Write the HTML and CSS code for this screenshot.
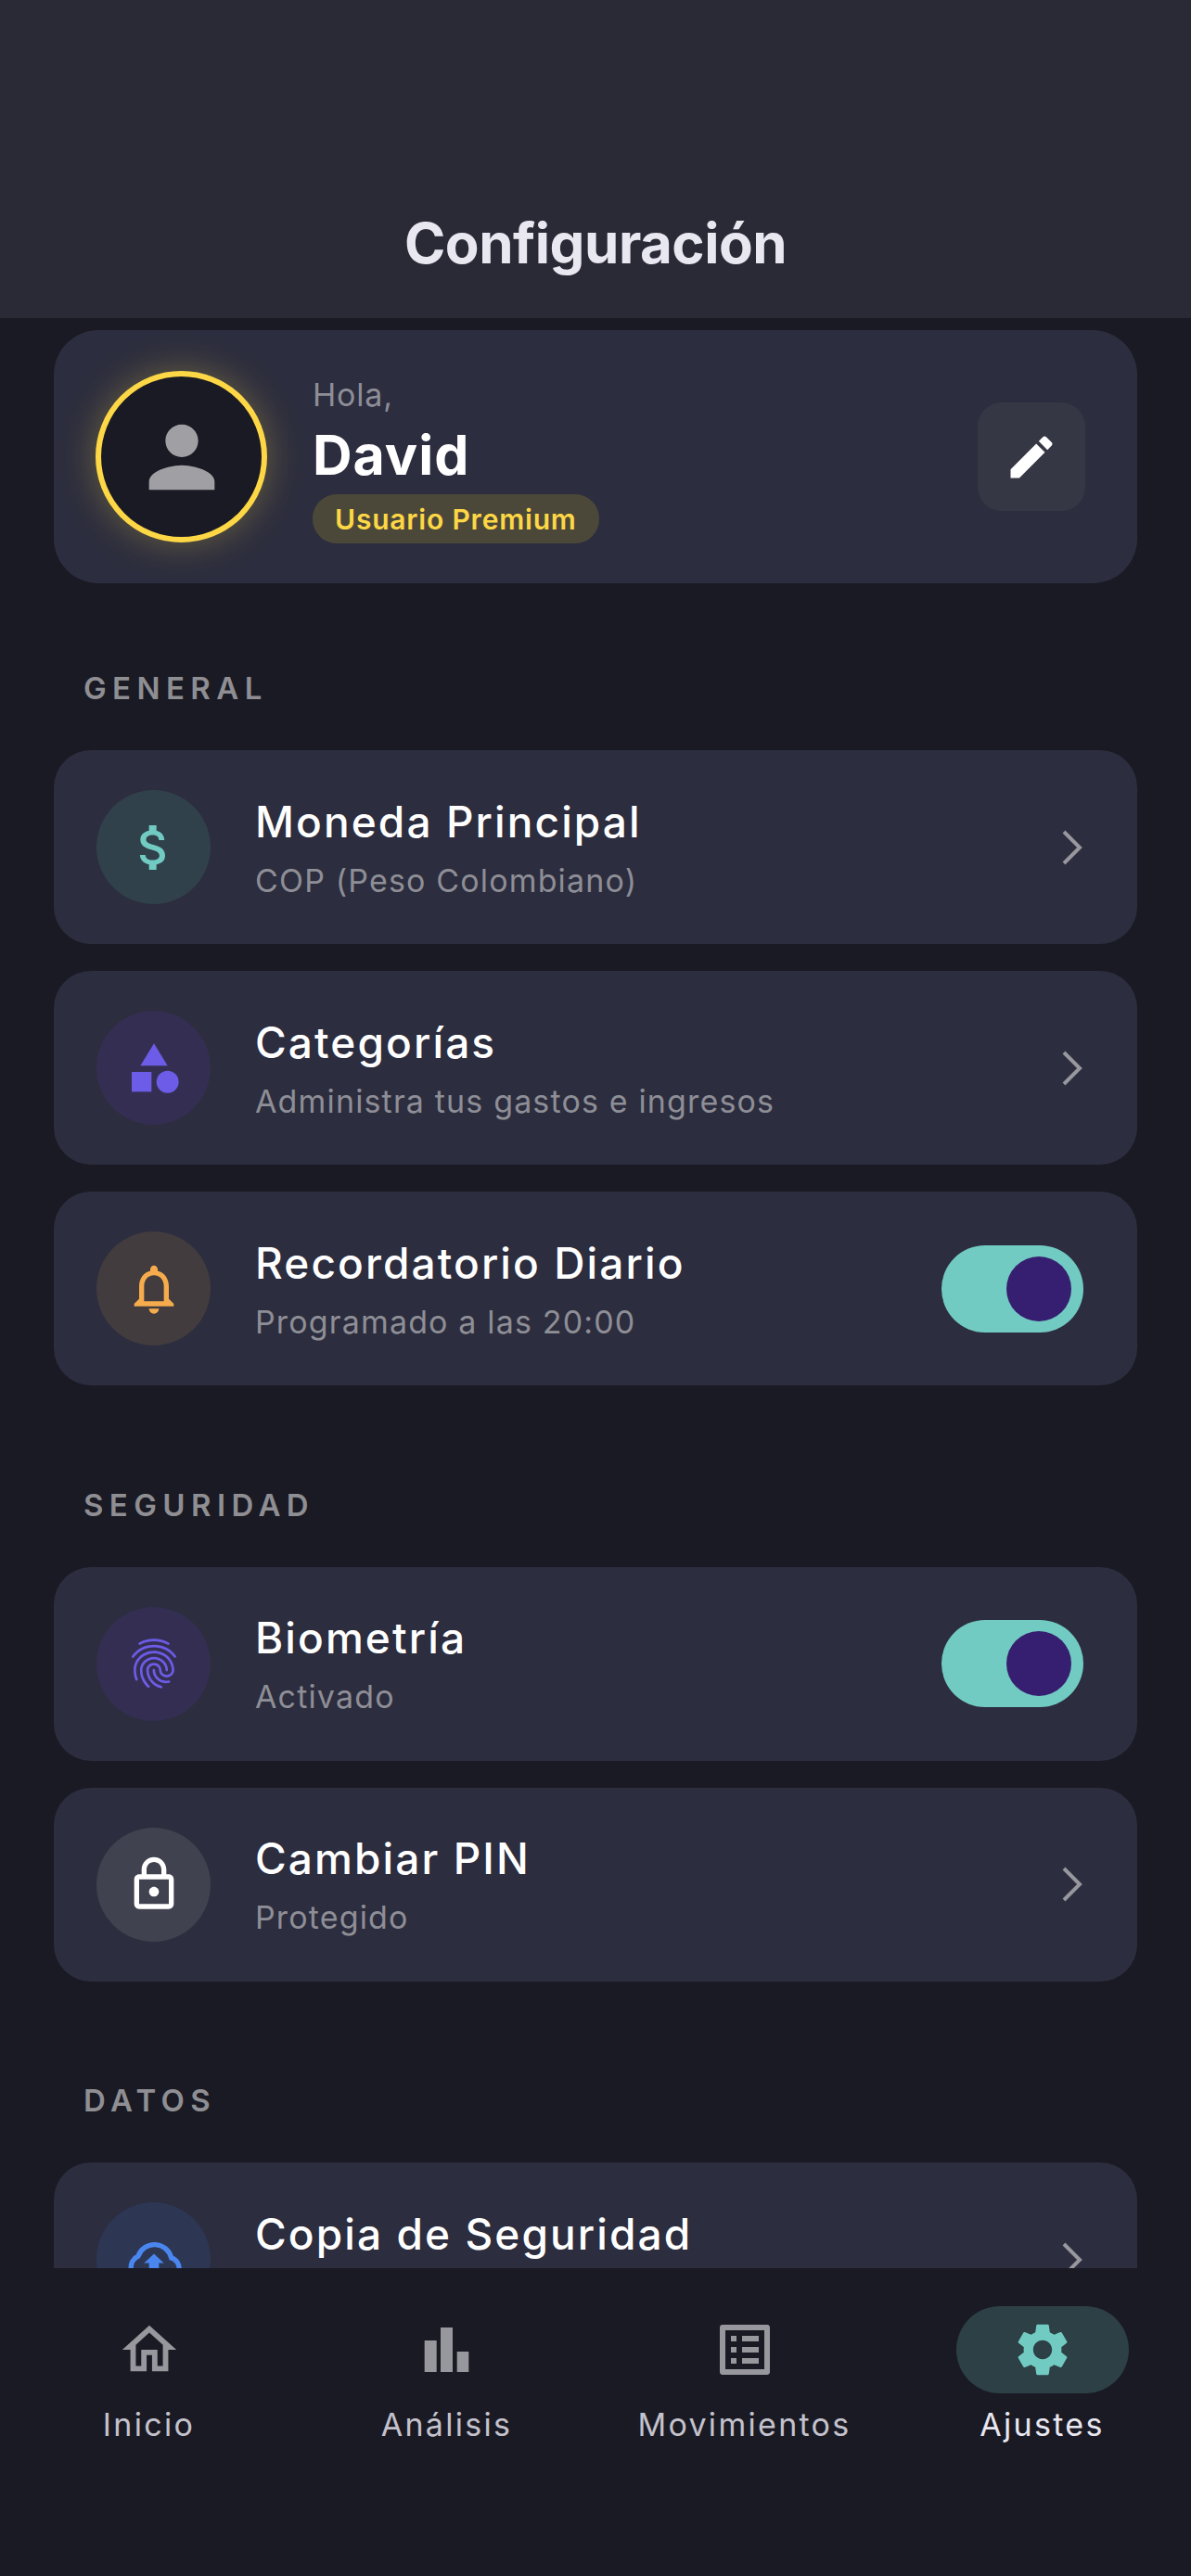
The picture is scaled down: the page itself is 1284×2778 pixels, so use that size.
FILE: index.html
```html
<!DOCTYPE html>
<html lang="es">
<head>
    <meta charset="UTF-8">
    <meta name="viewport" content="width=device-width, initial-scale=1.0">
    <title>Configuración</title>
    <link rel="stylesheet" href="styles.css">
</head>
<body>
    <div class="app">
        <header class="topbar">
            <h1>Configuración</h1>
        </header>

        <main class="content">
            <section class="profile">
                <div class="avatar">
                    <svg viewBox="0 0 24 24" class="avatar-icon"><path d="M12 12c2.21 0 4-1.79 4-4s-1.79-4-4-4-4 1.79-4 4 1.79 4 4 4zm0 2c-2.67 0-8 1.34-8 4v2h16v-2c0-2.66-5.33-4-8-4z"/></svg>
                </div>
                <div class="profile-text">
                    <p class="hello">Hola,</p>
                    <p class="name">David</p>
                    <span class="badge">Usuario Premium</span>
                </div>
                <button class="edit-btn" aria-label="Editar">
                    <svg viewBox="0 0 24 24"><path d="M3 17.25V21h3.75L17.81 9.94l-3.75-3.75L3 17.25zM20.71 7.04c.39-.39.39-1.02 0-1.41l-2.34-2.34c-.39-.39-1.02-.39-1.41 0l-1.83 1.83 3.75 3.75 1.83-1.83z"/></svg>
                </button>
            </section>

            <h2 class="section-label first">GENERAL</h2>
            <div class="rows">
                <div class="row">
                    <div class="row-icon teal">
                        <svg viewBox="0 0 24 24"><path d="M11.8 10.9c-2.27-.59-3-1.2-3-2.15 0-1.09 1.01-1.85 2.7-1.85 1.78 0 2.44.85 2.5 2.1h2.21c-.07-1.72-1.12-3.3-3.21-3.81V3h-3v2.16c-1.94.42-3.5 1.68-3.5 3.61 0 2.31 1.91 3.46 4.7 4.13 2.5.6 3 1.48 3 2.41 0 .69-.49 1.79-2.7 1.79-2.06 0-2.87-.92-2.98-2.1h-2.2c.12 2.19 1.76 3.42 3.68 3.83V21h3v-2.15c1.95-.37 3.5-1.5 3.5-3.55 0-2.84-2.43-3.81-4.7-4.4z"/></svg>
                    </div>
                    <div class="row-text">
                        <p class="row-title">Moneda Principal</p>
                        <p class="row-sub">COP (Peso Colombiano)</p>
                    </div>
                    <svg class="chevron" viewBox="0 0 24 40"><path d="M3 3l17 17L3 37"/></svg>
                </div>
                <div class="row">
                    <div class="row-icon violet">
                        <svg viewBox="0 0 24 24"><path d="M12 2l-5.5 9h11z"/><circle cx="17.5" cy="17.5" r="4.5"/><path d="M3 13.5h8v8H3z"/></svg>
                    </div>
                    <div class="row-text">
                        <p class="row-title">Categorías</p>
                        <p class="row-sub">Administra tus gastos e ingresos</p>
                    </div>
                    <svg class="chevron" viewBox="0 0 24 40"><path d="M3 3l17 17L3 37"/></svg>
                </div>
                <div class="row">
                    <div class="row-icon orange">
                        <svg viewBox="0 0 24 24"><path d="M12 22c1.1 0 2-.9 2-2h-4c0 1.1.9 2 2 2zm6-6v-5c0-3.07-1.63-5.64-4.5-6.32V4c0-.83-.67-1.5-1.5-1.5s-1.5.67-1.5 1.5v.68C7.64 5.36 6 7.92 6 11v5l-2 2v1h16v-1l-2-2zm-2 1H8v-6c0-2.48 1.51-4.5 4-4.5s4 2.02 4 4.5v6z"/></svg>
                    </div>
                    <div class="row-text">
                        <p class="row-title">Recordatorio Diario</p>
                        <p class="row-sub">Programado a las 20:00</p>
                    </div>
                    <div class="toggle"><span class="knob"></span></div>
                </div>
            </div>

            <h2 class="section-label">SEGURIDAD</h2>
            <div class="rows">
                <div class="row">
                    <div class="row-icon violet">
                        <svg viewBox="0 0 24 24"><path d="M17.81 4.47c-.08 0-.16-.02-.23-.06C15.66 3.42 14 3 12.01 3c-1.98 0-3.86.47-5.57 1.41-.24.13-.54.04-.68-.2-.13-.24-.04-.55.2-.68C7.82 2.52 9.86 2 12.01 2c2.13 0 3.99.47 6.03 1.52.25.13.34.43.21.67-.09.18-.26.28-.44.28zM3.5 9.72c-.1 0-.2-.03-.29-.09-.23-.16-.28-.47-.12-.7.99-1.4 2.25-2.5 3.75-3.27C9.98 4.04 14 4.03 17.15 5.65c1.5.77 2.76 1.86 3.75 3.25.16.22.11.54-.12.7-.23.16-.54.11-.7-.12-.9-1.26-2.04-2.25-3.39-2.94-2.87-1.47-6.54-1.47-9.4.01-1.36.7-2.5 1.7-3.4 2.96-.08.14-.23.21-.39.21zm6.25 12.07c-.13 0-.26-.05-.35-.15-.87-.87-1.34-1.43-2.01-2.64-.69-1.23-1.05-2.73-1.05-4.34 0-2.97 2.54-5.39 5.66-5.39s5.66 2.42 5.66 5.39c0 .28-.22.5-.5.5s-.5-.22-.5-.5c0-2.42-2.09-4.39-4.66-4.39-2.57 0-4.66 1.97-4.66 4.39 0 1.44.32 2.77.93 3.85.64 1.15 1.08 1.64 1.85 2.42.19.2.19.51 0 .71-.11.1-.24.15-.37.15zm7.17-1.85c-1.19 0-2.24-.3-3.1-.89-1.49-1.01-2.38-2.65-2.38-4.39 0-.28.22-.5.5-.5s.5.22.5.5c0 1.41.72 2.74 1.94 3.56.71.48 1.54.71 2.54.71.24 0 .64-.03 1.04-.1.27-.05.53.13.58.41.05.27-.13.53-.41.58-.57.11-1.07.12-1.21.12zM14.91 22c-.04 0-.09-.01-.13-.02-1.59-.44-2.63-1.03-3.72-2.1-1.4-1.39-2.17-3.24-2.17-5.22 0-1.62 1.38-2.94 3.08-2.94 1.7 0 3.08 1.32 3.08 2.94 0 1.07.93 1.94 2.08 1.94s2.08-.87 2.08-1.94c0-3.77-3.25-6.83-7.25-6.83-2.84 0-5.44 1.58-6.61 4.03-.39.81-.59 1.76-.59 2.8 0 .78.07 2.01.67 3.61.1.26-.03.55-.29.64-.26.1-.55-.04-.64-.29-.49-1.31-.73-2.61-.73-3.96 0-1.2.23-2.29.68-3.24 1.33-2.79 4.28-4.6 7.51-4.6 4.55 0 8.25 3.51 8.25 7.83 0 1.62-1.38 2.94-3.08 2.94s-3.08-1.32-3.08-2.94c0-1.07-.93-1.94-2.08-1.94s-2.08.87-2.08 1.94c0 1.71.66 3.31 1.87 4.51.95.94 1.86 1.46 3.27 1.85.27.07.42.35.35.61-.05.23-.26.38-.47.38z"/></svg>
                    </div>
                    <div class="row-text">
                        <p class="row-title">Biometría</p>
                        <p class="row-sub">Activado</p>
                    </div>
                    <div class="toggle"><span class="knob"></span></div>
                </div>
                <div class="row">
                    <div class="row-icon white">
                        <svg viewBox="0 0 24 24"><path d="M18 8h-1V6c0-2.76-2.24-5-5-5S7 3.24 7 6v2H6c-1.1 0-2 .9-2 2v10c0 1.1.9 2 2 2h12c1.1 0 2-.9 2-2V10c0-1.1-.9-2-2-2zM9 6c0-1.66 1.34-3 3-3s3 1.34 3 3v2H9V6zm9 14H6V10h12v10zm-6-3c1.1 0 2-.9 2-2s-.9-2-2-2-2 .9-2 2 .9 2 2 2z"/></svg>
                    </div>
                    <div class="row-text">
                        <p class="row-title">Cambiar PIN</p>
                        <p class="row-sub">Protegido</p>
                    </div>
                    <svg class="chevron" viewBox="0 0 24 40"><path d="M3 3l17 17L3 37"/></svg>
                </div>
            </div>

            <h2 class="section-label">DATOS</h2>
            <div class="rows">
                <div class="row">
                    <div class="row-icon blue">
                        <svg viewBox="0 0 24 24"><path class="cloud-line" d="M7 20H17.5A4.5 4.5 0 0 0 19 11.2A7 7 0 0 0 5.6 10.5A5 5 0 0 0 7 20z"/><path d="M8 13.3L12 9.6l4 3.7h-2V17h-4v-3.7z"/></svg>
                    </div>
                    <div class="row-text">
                        <p class="row-title">Copia de Seguridad</p>
                        <p class="row-sub">&nbsp;</p>
                    </div>
                    <svg class="chevron" viewBox="0 0 24 40"><path d="M3 3l17 17L3 37"/></svg>
                </div>
            </div>
        </main>

        <nav class="tabbar">
            <div class="tab">
                <span class="tab-icon"><svg class="ic-home" viewBox="0 0 24 24"><path d="M12 5.69l5 4.5V18h-2v-6H9v6H7v-7.81l5-4.5M12 3L2 12h3v8h6v-6h2v6h6v-8h3L12 3z"/></svg></span>
                <span class="tab-label">Inicio</span>
            </div>
            <div class="tab">
                <span class="tab-icon"><svg class="ic-bars" viewBox="0 0 66 66"><path d="M8.7 23h13v34h-13zM26 9h13v48H26zM43.7 35h12.6v22H43.7z"/></svg></span>
                <span class="tab-label">Análisis</span>
            </div>
            <div class="tab">
                <span class="tab-icon"><svg class="ic-list" viewBox="0 0 24 24"><path d="M19 5v14H5V5h14m1.1-2H3.9c-.5 0-.9.4-.9.9v16.2c0 .4.4.9.9.9h16.2c.4 0 .9-.5.9-.9V3.9c0-.5-.5-.9-.9-.9zM11 7h6v2h-6V7zm0 4h6v2h-6v-2zm0 4h6v2h-6zM7 7h2v2H7zm0 4h2v2H7zm0 4h2v2H7z"/></svg></span>
                <span class="tab-label">Movimientos</span>
            </div>
            <div class="tab active">
                <span class="tab-icon"><svg class="ic-gear" viewBox="0 0 24 24"><path d="M19.14 12.94c.04-.3.06-.61.06-.94 0-.32-.02-.64-.07-.94l2.03-1.58c.18-.14.23-.41.12-.61l-1.92-3.32c-.12-.22-.37-.29-.59-.22l-2.39.96c-.5-.38-1.03-.7-1.62-.94l-.36-2.54c-.04-.24-.24-.41-.48-.41h-3.84c-.24 0-.43.17-.47.41l-.36 2.54c-.59.24-1.13.57-1.62.94l-2.39-.96c-.22-.08-.47 0-.59.22L2.74 8.87c-.12.21-.08.47.12.61l2.03 1.58c-.05.3-.09.63-.09.94s.02.64.07.94l-2.03 1.58c-.18.14-.23.41-.12.61l1.92 3.32c.12.22.37.29.59.22l2.39-.96c.5.38 1.03.7 1.62.94l.36 2.54c.05.24.24.41.48.41h3.84c.24 0 .44-.17.47-.41l.36-2.54c.59-.24 1.13-.56 1.62-.94l2.39.96c.22.08.47 0 .59-.22l1.92-3.32c.12-.22.07-.47-.12-.61l-2.01-1.58zM12 15.6c-1.98 0-3.6-1.62-3.6-3.6s1.62-3.6 3.6-3.6 3.6 1.62 3.6 3.6-1.62 3.6-3.6 3.6z"/></svg></span>
                <span class="tab-label">Ajustes</span>
            </div>
        </nav>
    </div>
</body>
</html>
```

FILE: styles.css
```css
* {
    box-sizing: border-box;
}

body {
    margin: 0;
    background: #1a1a24;
    font-family: 'Inter', 'Liberation Sans', sans-serif;
    color: #fff;
}

p, h1, h2 {
    margin: 0;
}

.app {
    display: flex;
    flex-direction: column;
    height: 2778px;
    overflow: hidden;
}

.topbar {
    flex: none;
    height: 343px;
    padding-top: 222px;
    background: #2a2a36;
    text-align: center;
}

.topbar h1 {
    font-size: 60px;
    line-height: 80px;
    font-weight: 700;
    letter-spacing: -0.5px;
    color: #e9e7f0;
}

.content {
    flex: 1;
    min-height: 0;
    overflow: hidden;
    padding: 13px 58px 0 58px;
}

/* Profile card */
.profile {
    display: flex;
    align-items: center;
    height: 273px;
    padding: 0 56px 0 45px;
    background: #2c2d3e;
    border-radius: 48px;
}

.avatar {
    flex: none;
    display: flex;
    align-items: center;
    justify-content: center;
    width: 185px;
    height: 185px;
    margin-right: 49px;
    background: #1a1a24;
    border: 6px solid #fdd745;
    border-radius: 50%;
    box-shadow: 0 0 40px rgba(253, 215, 69, 0.3);
}

.avatar-icon {
    width: 106px;
    height: 106px;
    fill: #a0a0a4;
}

.profile-text {
    flex: 1;
    padding-top: 5px;
}

.hello {
    font-size: 34px;
    line-height: 44px;
    letter-spacing: 0.8px;
    color: #8e8e98;
}

.name {
    margin-top: 9px;
    font-size: 59px;
    line-height: 68px;
    font-weight: 700;
    letter-spacing: 1px;
}

.badge {
    display: inline-block;
    margin-top: 8px;
    padding: 0 24px;
    height: 53px;
    line-height: 55px;
    font-size: 30px;
    font-weight: 600;
    letter-spacing: 0.8px;
    color: #fdd745;
    background: #4c4839;
    border-radius: 26px;
}

.edit-btn {
    display: flex;
    align-items: center;
    justify-content: center;
    width: 116px;
    height: 117px;
    padding: 0;
    background: #363744;
    border: none;
    border-radius: 26px;
}

.edit-btn svg {
    width: 60px;
    height: 60px;
    fill: #fff;
}

/* Sections */
.section-label {
    height: 40px;
    margin: 108.5px 0 47px 32px;
    font-size: 33px;
    line-height: 40px;
    font-weight: 600;
    letter-spacing: 6.4px;
    color: #8e8e93;
}

.section-label.first {
    margin-top: 93px;
}

.rows {
    display: flex;
    flex-direction: column;
    gap: 29px;
}

.row {
    display: flex;
    align-items: center;
    height: 209px;
    padding: 0 58px 0 46px;
    background: #2c2d3e;
    border-radius: 40px;
}

.row-icon {
    flex: none;
    display: flex;
    align-items: center;
    justify-content: center;
    width: 123px;
    height: 123px;
    margin-right: 48px;
    border-radius: 50%;
}

.row-icon svg {
    width: 64px;
    height: 64px;
}

.teal { background: #31414b; fill: #72cbc2; }
.violet { background: #342f52; fill: #6c5ce7; }
.orange { background: #423c3f; fill: #f6ab4c; }
.white { background: #41424f; fill: #fff; }
.blue { background: #2d3754; fill: #4a86f0; }

.cloud-line {
    fill: none;
    stroke: #4a86f0;
    stroke-width: 2px;
}

.row-text {
    flex: 1;
    padding-top: 2px;
}

.row-title {
    font-size: 46px;
    line-height: 56px;
    font-weight: 450;
    letter-spacing: 2.1px;
    color: #fff;
}

.row-sub {
    margin-top: 14px;
    font-size: 34px;
    line-height: 44px;
    letter-spacing: 1.15px;
    color: #8e8e96;
}

.chevron {
    flex: none;
    width: 24px;
    height: 40px;
    fill: none;
    stroke: #97979d;
    stroke-width: 4px;
}

.toggle {
    flex: none;
    display: flex;
    align-items: center;
    justify-content: flex-end;
    width: 153px;
    height: 94px;
    padding-right: 13px;
    background: #72cbc2;
    border-radius: 47px;
}

.knob {
    width: 70px;
    height: 70px;
    background: #361f70;
    border-radius: 50%;
}

/* Bottom navigation */
.tabbar {
    flex: none;
    display: grid;
    grid-template-columns: repeat(4, 1fr);
    height: 332px;
    padding-top: 41px;
    background: #1a1a24;
}

.tab {
    display: flex;
    flex-direction: column;
    align-items: center;
}

.tab-icon {
    display: flex;
    align-items: center;
    justify-content: center;
    width: 186px;
    height: 94px;
    border-radius: 47px;
    fill: #97979d;
}

.ic-home { width: 70px; height: 70px; }
.ic-bars { width: 66px; height: 66px; }
.ic-list { width: 72px; height: 72px; }
.ic-gear { width: 68px; height: 68px; }

.tab-label {
    margin-top: 12px;
    font-size: 34px;
    line-height: 44px;
    letter-spacing: 2.3px;
    color: #c4c2cc;
}

.tab.active .tab-icon {
    background: #2c4046;
    fill: #72cbc2;
}

.tab.active .tab-label {
    color: #e9e7f0;
}
```
